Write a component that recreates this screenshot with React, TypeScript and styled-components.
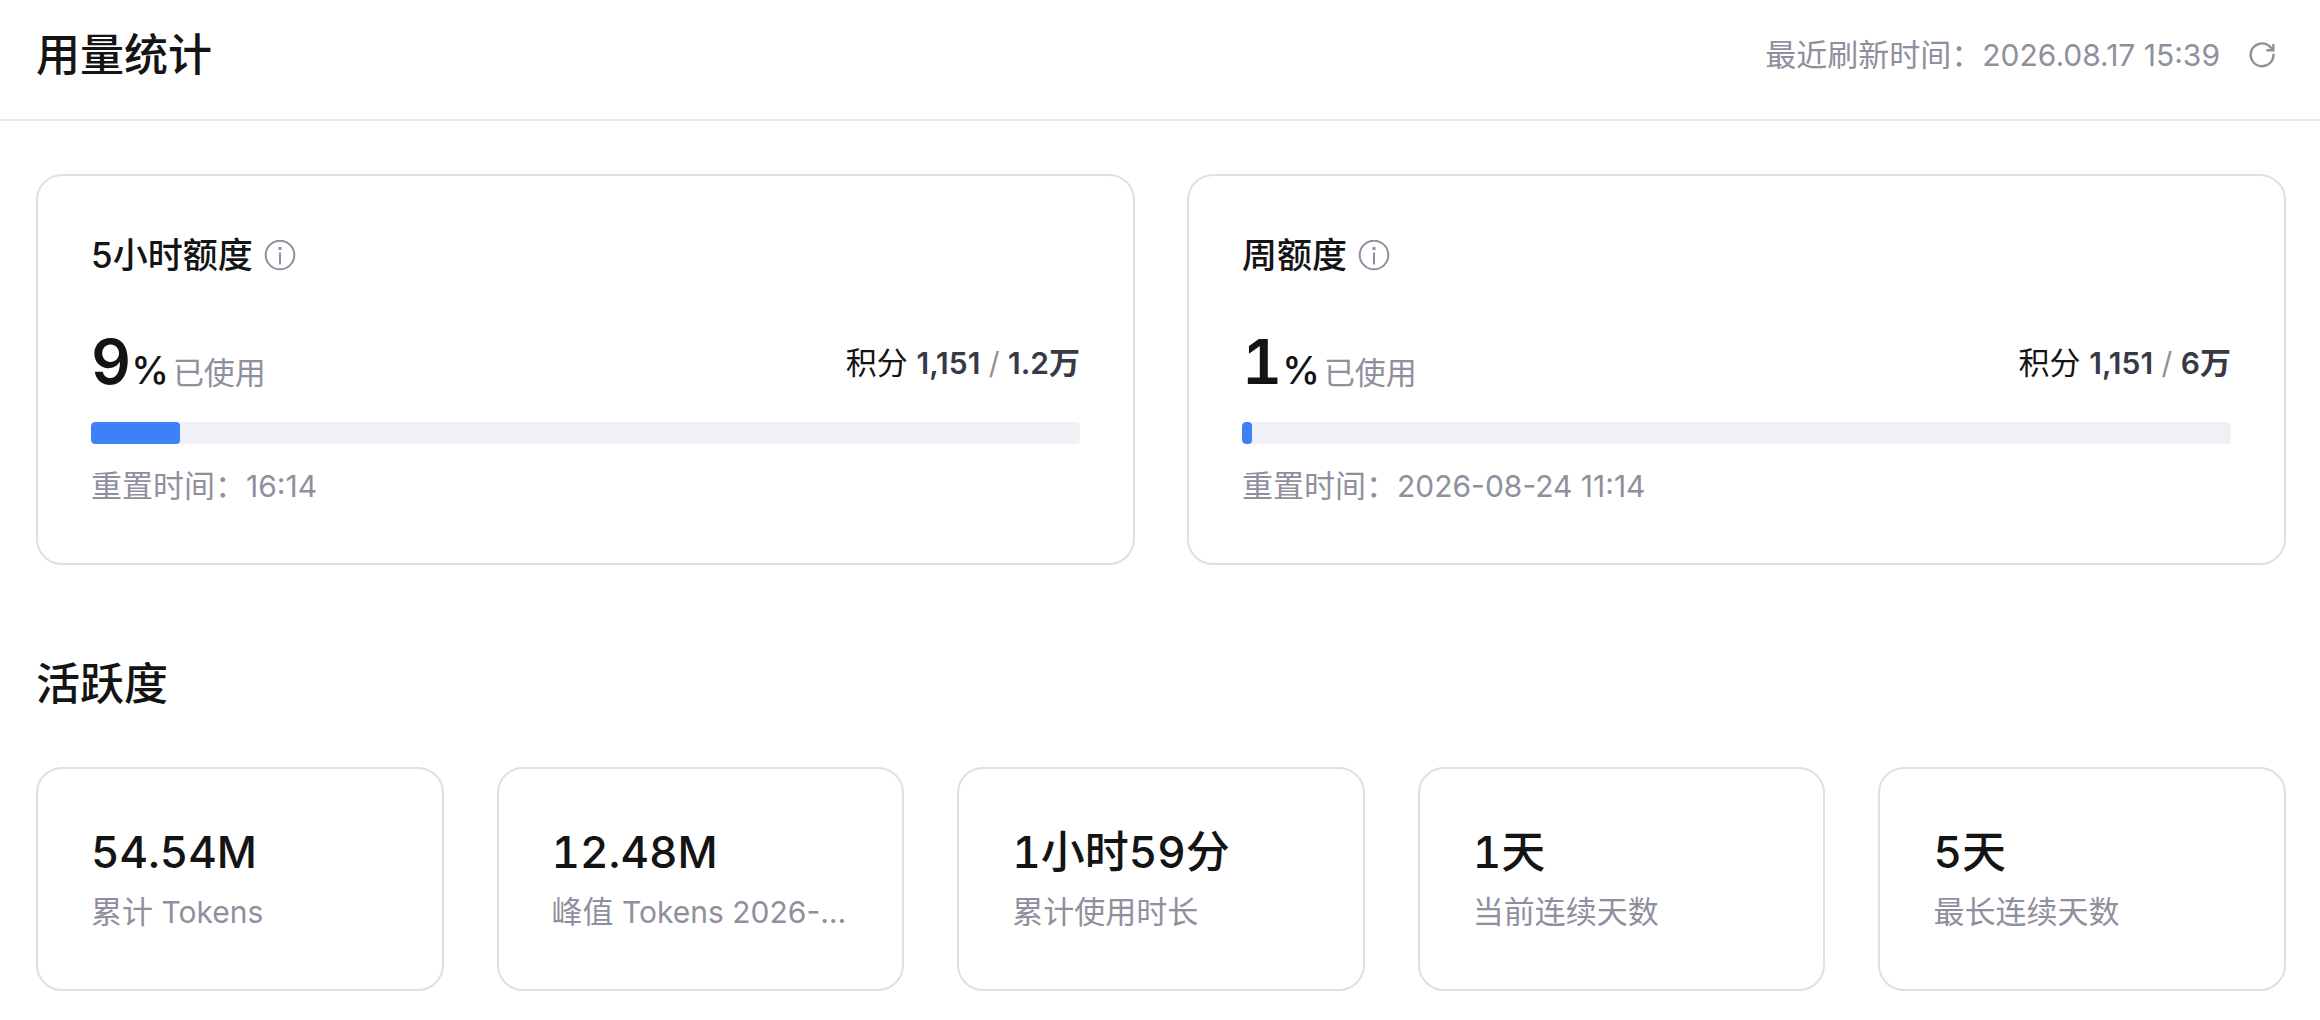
import React from 'react';
import styled, { createGlobalStyle } from 'styled-components';

const GlobalStyle = createGlobalStyle`
  *, *::before, *::after { box-sizing: border-box; }
  body {
    margin: 0;
    background: #fff;
    color: #141414;
    font-family: Inter, "Noto Sans CJK SC", sans-serif;
  }
  h1, h2, h3, p { margin: 0; }
`;

const Header = styled.header`
  display: flex;
  align-items: center;
  justify-content: space-between;
  padding: 24px 34px 33px 36px;
  border-bottom: 2px solid #e9e9f0;
`;

const SectionTitle = styled.h2`
  font-size: 44px;
  line-height: 62px;
  font-weight: 500;
`;

const Refresh = styled.div`
  display: flex;
  align-items: center;
  gap: 18px;
  color: #8f8f9d;
  font-size: 31px;
  line-height: 48px;
`;

const IconButton = styled.button`
  display: flex;
  align-items: center;
  justify-content: center;
  width: 48px;
  height: 48px;
  padding: 0;
  border: 0;
  background: none;
  color: inherit;
  cursor: pointer;
`;

const Main = styled.main`
  display: flex;
  flex-direction: column;
  gap: 88px;
  padding: 53px 34px 29px 36px;
`;

const Grid = styled.div<{ $columns: number; $gap: number }>`
  display: grid;
  grid-template-columns: repeat(${(p) => p.$columns}, minmax(0, 1fr));
  gap: ${(p) => p.$gap}px;
`;

const Card = styled.article`
  min-width: 0;
  padding: 53px;
  border: 2px solid #dfdfe6;
  border-radius: 26px;
`;

const CardTitle = styled.h3`
  display: flex;
  align-items: center;
  gap: 11px;
  margin-bottom: 40px;
  font-size: 35px;
  line-height: 53px;
  font-weight: 500;
`;

const InfoButton = styled(IconButton)`
  width: 32px;
  height: 32px;
  color: #8f8f9d;
`;

const UsageRow = styled.div`
  display: flex;
  align-items: flex-end;
  justify-content: space-between;
  height: 82px;
  margin-bottom: 18px;
`;

const Percent = styled.p`
  display: flex;
  align-items: baseline;
  line-height: 62px;
`;

const PercentValue = styled.span`
  font-size: 62px;
  font-weight: 600;
  font-variant-numeric: tabular-nums;
`;

const PercentSign = styled.span`
  font-size: 38px;
  font-weight: 500;
`;

const Used = styled.span`
  margin-left: 4px;
  font-size: 31px;
  color: #8f8f9d;
`;

const Credits = styled.p`
  align-self: center;
  font-size: 31px;
  line-height: 48px;
`;

const CreditNumber = styled.span`
  font-weight: 600;
  color: #373a46;
`;

const Slash = styled.span`
  color: #8f8f9d;
`;

const Track = styled.div`
  height: 22px;
  margin-bottom: 18px;
  border-radius: 4px;
  background: #f0f1f6;
  overflow: hidden;
`;

const Fill = styled.div`
  height: 100%;
  border-radius: 4px;
  background: #4080f7;
`;

const Muted = styled.p`
  font-size: 31px;
  line-height: 48px;
  color: #8f8f9d;
  white-space: nowrap;
`;

const Latin = styled.span`
  font-size: 30px;
`;

const StatValue = styled.p`
  margin-bottom: 6px;
  font-size: 44px;
  line-height: 60px;
  font-weight: 500;
  font-variant-numeric: tabular-nums;
  white-space: nowrap;
`;

const Activity = styled.section`
  display: flex;
  flex-direction: column;
  gap: 52px;
`;

const InfoIcon = () => (
  <svg width="32" height="32" viewBox="0 0 32 32" fill="none" stroke="currentColor" strokeWidth="2" aria-hidden="true">
    <circle cx="16" cy="15" r="14.3" />
    <path d="M16 12.4v12" />
    <path d="M16 7v3" strokeWidth="3" />
  </svg>
);

const RefreshIcon = () => (
  <svg width="28" height="28" viewBox="0 0 28 28" fill="none" stroke="currentColor" strokeWidth="2.4" aria-hidden="true">
    <path d="M25.4 12.6A11.4 11.4 0 1 1 20.8 4.6L24.6 8.2" />
    <path d="M25.4 3v6.2h-7" />
  </svg>
);

interface Quota {
  title: string;
  percent: number;
  used: string;
  total: string;
  reset: string;
}

const quotas: Quota[] = [
  { title: '5小时额度', percent: 9, used: '1,151', total: '1.2万', reset: '16:14' },
  { title: '周额度', percent: 1, used: '1,151', total: '6万', reset: '2026-08-24 11:14' },
];

interface Stat {
  value: string;
  label: string;
  note?: string;
}

const stats: Stat[] = [
  { value: '54.54M', label: '累计', note: 'Tokens' },
  { value: '12.48M', label: '峰值', note: 'Tokens 2026-…' },
  { value: '1小时59分', label: '累计使用时长' },
  { value: '1天', label: '当前连续天数' },
  { value: '5天', label: '最长连续天数' },
];

const QuotaCard = ({ title, percent, used, total, reset }: Quota) => (
  <Card>
    <CardTitle>
      {title}
      <InfoButton type="button" aria-label={`${title}说明`}>
        <InfoIcon />
      </InfoButton>
    </CardTitle>
    <UsageRow>
      <Percent>
        <PercentValue>{percent}</PercentValue>
        <PercentSign>%</PercentSign>
        <Used>已使用</Used>
      </Percent>
      <Credits>
        积分 <Latin><CreditNumber>{used}</CreditNumber> <Slash>/</Slash> </Latin><CreditNumber><Latin>{total.slice(0, -1)}</Latin>{total.slice(-1)}</CreditNumber>
      </Credits>
    </UsageRow>
    <Track role="progressbar" aria-label={title} aria-valuemin={0} aria-valuemax={100} aria-valuenow={percent}>
      <Fill style={{ width: `${percent}%` }} />
    </Track>
    <Muted>重置时间：<Latin>{reset}</Latin></Muted>
  </Card>
);

export default function App() {
  return (
    <>
      <GlobalStyle />
      <Header>
        <SectionTitle as="h1">用量统计</SectionTitle>
        <Refresh>
          <span>最近刷新时间：<Latin>2026.08.17 15:39</Latin></span>
          <IconButton type="button" aria-label="刷新">
            <RefreshIcon />
          </IconButton>
        </Refresh>
      </Header>
      <Main>
        <Grid $columns={2} $gap={52}>
          {quotas.map((quota) => (
            <QuotaCard key={quota.title} {...quota} />
          ))}
        </Grid>
        <Activity>
          <SectionTitle>活跃度</SectionTitle>
          <Grid $columns={5} $gap={53}>
            {stats.map((stat) => (
              <Card key={stat.value}>
                <StatValue>{stat.value}</StatValue>
                <Muted>
                  {stat.label}
                  {stat.note && <Latin> {stat.note}</Latin>}
                </Muted>
              </Card>
            ))}
          </Grid>
        </Activity>
      </Main>
    </>
  );
}
